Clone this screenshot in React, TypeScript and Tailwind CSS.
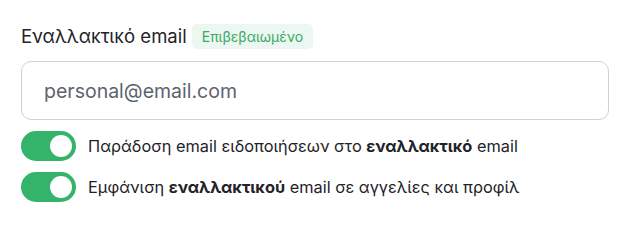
import React, { useState } from "react";

const Toggle = ({ on, onChange }: { on: boolean; onChange: () => void }) => (
  <button
    onClick={onChange}
    className={`flex h-[30px] w-[55px] shrink-0 items-center rounded-full px-[4px] ${
      on ? "justify-end bg-[#34b36b]" : "justify-start bg-gray-300"
    }`}
  >
    <span className="block h-[22px] w-[22px] rounded-full bg-white" />
  </button>
);

const App = () => {
  const [deliver, setDeliver] = useState(true);
  const [show, setShow] = useState(true);

  return (
    <div className="min-h-[226px] bg-white pl-[21px] pt-[24px] font-['Inter',sans-serif] text-[#1f2328]">
      <div className="w-[588px]">
        <div className="flex items-center gap-[5px]">
          <span className="text-[18.5px] leading-[25px]">Εναλλακτικό email</span>
          <span className="rounded-[5px] bg-[#ebf7f0] px-[10px] text-[14px] leading-[25px] text-[#3aa966]">
            Επιβεβαιωμένο
          </span>
        </div>

        <input
          type="email"
          placeholder="personal@email.com"
          className="mt-[12px] block h-[59px] w-full rounded-[10px] border border-[#cdd1dc] px-[22px] text-[19.5px] text-gray-700 outline-none placeholder:text-[#5c636e]"
        />

        <div className="mt-[11px] flex flex-col gap-[11px]">
          <div className="flex items-center gap-[12px]">
            <Toggle on={deliver} onChange={() => setDeliver(!deliver)} />
            <span className="text-[16.35px]">
              Παράδοση email ειδοποιήσεων στο <b className="font-bold">εναλλακτικό</b> email
            </span>
          </div>
          <div className="flex items-center gap-[12px]">
            <Toggle on={show} onChange={() => setShow(!show)} />
            <span className="text-[16.35px]">
              Εμφάνιση <b className="font-bold">εναλλακτικού</b> email σε αγγελίες και προφίλ
            </span>
          </div>
        </div>
      </div>
    </div>
  );
};

export default App;
